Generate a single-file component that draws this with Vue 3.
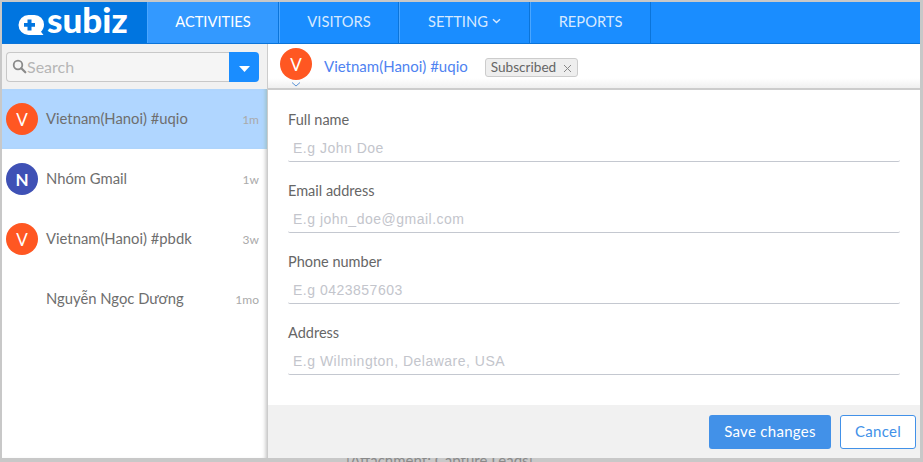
<template>
  <div class="frame">
    <header class="topbar">
      <div class="logo">
        <svg class="logo-mark" width="28" height="22" viewBox="0 0 28 22">
          <path d="M10.5 1h6A9.5 9.5 0 0 1 26 10.5c0 3-1.200 5.500-3 7.300L25.500 21H10.500a10 10 0 0 1 0-20z" fill="#fff" />
          <path d="M9.500 5.500h4v3.500H17v3.800h-3.500v3.700h-4v-3.700H6V9h3.500z" fill="#0075e0" />
        </svg>
        <span class="logo-text">subiz</span>
      </div>
      <nav class="tabs">
        <a v-for="tab in tabs" :key="tab.name" class="tab" :class="{ active: tab.active }" :style="{ width: tab.width + 'px' }">
          {{ tab.name }}
          <svg v-if="tab.menu" width="9" height="6" viewBox="0 0 9 6" class="tab-caret">
            <path d="M1 1.200l3.500 3.300 3.500-3.300" fill="none" stroke="#d6e9ff" stroke-width="1.400" />
          </svg>
        </a>
      </nav>
    </header>

    <div class="body">
      <aside class="sidebar">
        <div class="search-wrap">
          <div class="search">
            <div class="search-input">
              <svg width="15" height="15" viewBox="0 0 15 15">
                <circle cx="6" cy="6" r="4.300" fill="none" stroke="#8a8a8a" stroke-width="1.800" />
                <path d="M9.300 9.300l4 4" stroke="#8a8a8a" stroke-width="2.200" stroke-linecap="round" />
              </svg>
              <span>Search</span>
            </div>
            <button class="search-btn">
              <svg width="11" height="6" viewBox="0 0 11 6"><path d="M0 0h11L5.500 6z" fill="#fff" /></svg>
            </button>
          </div>
        </div>
        <ul class="convos">
          <li v-for="c in convos" :key="c.name" class="convo" :class="{ selected: c.selected }">
            <span class="avatar" :class="c.color">{{ c.initial }}</span>
            <span class="convo-name">{{ c.name }}</span>
            <span class="convo-time">{{ c.time }}</span>
          </li>
        </ul>
      </aside>

      <main class="panel">
        <div class="panel-head">
          <div class="head-user">
            <span class="avatar orange">V</span>
            <svg class="head-caret" width="10" height="5" viewBox="0 0 10 5">
              <path d="M1 .5l4 3.500 4-3.500" fill="none" stroke="#5b93d6" stroke-width="1" />
            </svg>
          </div>
          <span class="head-name">Vietnam(Hanoi) #uqio</span>
          <span class="tag">Subscribed
            <svg class="tag-x" width="9" height="9" viewBox="0 0 9 9">
              <path d="M1 1l7 7M8 1l-7 7" stroke="#888" stroke-width="1" />
            </svg>
          </span>
        </div>
        <form class="form">
          <div v-for="f in fields" :key="f.label" class="field">
            <label>{{ f.label }}</label>
            <div class="input">{{ f.placeholder }}</div>
          </div>
        </form>
        <div class="actions">
          <button class="btn primary">Save changes</button>
          <button class="btn ghost">Cancel</button>
        </div>
        <div class="behind"><span>[Attachment: Capture Leads]</span></div>
      </main>
    </div>
  </div>
</template>

<script setup>
const tabs = [
  { name: 'ACTIVITIES', width: 132, active: true },
  { name: 'VISITORS', width: 120 },
  { name: 'SETTING', width: 131, menu: true },
  { name: 'REPORTS', width: 121 },
]

const convos = [
  { name: 'Vietnam(Hanoi) #uqio', initial: 'V', color: 'orange', time: '1m', selected: true },
  { name: 'Nhóm Gmail', initial: 'N', color: 'indigo', time: '1w' },
  { name: 'Vietnam(Hanoi) #pbdk', initial: 'V', color: 'orange', time: '3w' },
  { name: 'Nguyễn Ngọc Dương', initial: '', color: 'none', time: '1mo' },
]

const fields = [
  { label: 'Full name', placeholder: 'E.g John Doe' },
  { label: 'Email address', placeholder: 'E.g john_doe@gmail.com' },
  { label: 'Phone number', placeholder: 'E.g 0423857603' },
  { label: 'Address', placeholder: 'E.g Wilmington, Delaware, USA' },
]
</script>

<style>
html, body { margin: 0; background: #c4c4c4; overflow: hidden; }
</style>

<style scoped>
.frame {
  width: 923px;
  height: 462px;
  box-sizing: border-box;
  padding: 2px 3px 4px 2px;
  background: #c8c8c8;
  display: flex;
  flex-direction: column;
  font-family: Lato, "Noto Sans", sans-serif;
  color: #666;
}
.topbar {
  height: 42px;
  flex: none;
  display: flex;
  background: #1a8dff;
  border-bottom: 1px solid #0b74d9;
  box-sizing: border-box;
}
.logo {
  width: 145px;
  flex: none;
  background: #0075e0;
  display: flex;
  align-items: center;
  padding-left: 16px;
  box-sizing: border-box;
  color: #fff;
}
.logo-mark { margin-top: 5px; }
.logo-text {
  font-size: 35px;
  font-weight: 900;
  line-height: 1;
  margin-left: 1px;
  margin-top: -6px;
}
.tabs { display: flex; }
.tab {
  box-sizing: border-box;
  display: flex;
  align-items: center;
  justify-content: center;
  gap: 4px;
  color: #d6e9ff;
  font-size: 14.7px;
  padding-bottom: 4px;
  border-right: 1px solid #0b74d9;
  border-left: 1px solid #4ba6ff;
}
.tab.active { background: #3399ff; color: #fff; }
.tab-caret { margin-top: 1px; }
.body { flex: 1; display: flex; min-height: 0; }
.sidebar {
  width: 265px;
  flex: none;
  background: #fff;
  box-shadow: inset -4px 0 4px -3px #bbb;
  display: flex;
  flex-direction: column;
}
.search-wrap {
  height: 45px;
  background: #f1f1f1;
  box-sizing: border-box;
  padding: 8px 8px 0 4px;
}
.search { display: flex; height: 30px; }
.search-input {
  flex: 1;
  box-sizing: border-box;
  background: #f5f5f5;
  border: 1px solid #c8c8c8;
  border-right: 0;
  border-radius: 4px 0 0 4px;
  display: flex;
  align-items: center;
  gap: 0;
  padding: 0 0 2px 5px;
  color: #b5b5b5;
  font-size: 16px;
}
.search-btn {
  width: 30px;
  border: 0;
  padding: 0;
  background: #1a8dff;
  border-radius: 0 4px 4px 0;
}
.convos { list-style: none; margin: 0; padding: 0; }
.convo {
  height: 60px;
  display: flex;
  align-items: center;
  padding: 0 8px 0 4px;
  font-size: 14.8px;
}
.convo.selected { background: #b0d6ff; box-shadow: inset -4px 0 4px -3px #9bb; }
.avatar {
  width: 32px;
  height: 32px;
  border-radius: 50%;
  flex: none;
  display: flex;
  align-items: center;
  justify-content: center;
  color: #fff;
  font-size: 17px;
}
.orange { background: #ff5722; }
.indigo { background: #3f51b5; font-weight: 700; }
.none { background: transparent; }
.convo-name { margin: -2px 0 0 8px; flex: 1; color: #6e6e6e; }
.convo-time { font-size: 12px; color: #aaa; margin-top: 1px; }
.panel {
  flex: 1;
  display: flex;
  flex-direction: column;
  background: #fff;
  border-left: 1px solid #ccc;
  min-width: 0;
  position: relative;
}
.panel-head {
  height: 46px;
  flex: none;
  box-sizing: border-box;
  display: flex;
  align-items: flex-start;
  padding: 4px 0 0 12px;
  background: linear-gradient(#fff 34px, #eee 45px);
  border-bottom: 2px solid #ccc;
}
.head-user { position: relative; width: 32px; }
.head-caret { position: absolute; left: 11px; top: 34px; }
.head-name { margin: 9px 0 0 12px; font-size: 15px; color: #4f83f1; }
.tag {
  margin: 10px 0 0 17px;
  box-sizing: border-box;
  height: 19px;
  width: 93px;
  padding: 0 5px;
  background: #eee;
  border: 1px solid #ccc;
  border-radius: 3px;
  font-size: 13.6px;
  color: #666;
  line-height: 17px;
  white-space: nowrap;
  display: flex;
  align-items: center;
  justify-content: space-between;
}
.tag-x { flex: none; margin-top: 1px; }
.form {
  flex: 1;
  box-sizing: border-box;
  padding: 21px 20px 0 20px;
  display: flex;
  flex-direction: column;
  gap: 20px;
}
.field label { display: block; font-size: 14.5px; line-height: 18px; color: #666; }
.input {
  height: 33px;
  box-sizing: border-box;
  padding: 11px 5px 0;
  border-bottom: 1px solid #c4c8d0;
  border-radius: 0 0 2px 2px;
  font-family: "Liberation Sans", Arial, sans-serif;
  font-size: 14px;
  letter-spacing: 0.5px;
  color: #c3c5cc;
}
.actions {
  height: 53px;
  flex: none;
  box-sizing: border-box;
  background: #f1f1f1;
  display: flex;
  justify-content: flex-end;
  align-items: flex-start;
  gap: 9px;
  padding: 10px 4px 0 0;
}
.btn {
  height: 34px;
  box-sizing: border-box;
  border-radius: 3px;
  font-family: inherit;
  font-size: 15px;
  letter-spacing: 0.3px;
  padding: 0 0 2px;
}
.primary { width: 122px; background: #4291e8; border: 0; color: #fff; }
.ghost { width: 76px; background: #fff; border: 1px solid #4291e8; color: #4291e8; }
.behind {
  position: absolute;
  left: 0;
  right: 0;
  top: 100%;
  height: 4px;
  overflow: hidden;
}
.behind span {
  display: block;
  margin: -7px 0 0 78px;
  font-size: 15px;
  color: #8a8a8a;
}
</style>
